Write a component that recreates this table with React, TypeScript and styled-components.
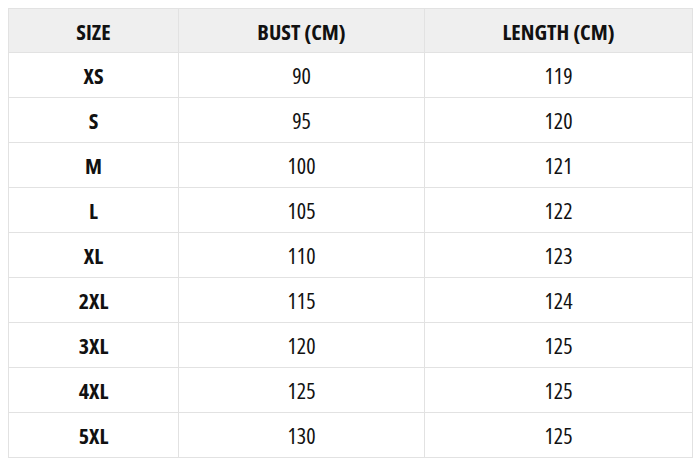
import React from "react";
import styled, { createGlobalStyle } from "styled-components";

const Global = createGlobalStyle`
  html, body { margin: 0; padding: 0; background: #ffffff; }
  body { font-family: "Open Sans", "Liberation Sans", sans-serif; }
`;

const Page = styled.div`
  padding: 8px;
  width: 700px;
  height: 467px;
  box-sizing: border-box;
`;

const Table = styled.table`
  width: 684px;
  border-collapse: collapse;
  table-layout: fixed;
  font-family: "Open Sans", "Liberation Sans", sans-serif;
  font-stretch: 75%;
  color: #111;
`;

const Th = styled.th`
  height: 43px;
  padding: 0;
  background: #efefef;
  border: 1.5px solid #e2e2e2;
  font-size: 22px;
  line-height: 1;
  font-weight: 700;
  text-align: center;
  vertical-align: middle;
`;

const Td = styled.td<{ $bold?: boolean }>`
  height: 44px;
  padding: 0;
  border: 1.5px solid #e2e2e2;
  font-size: 22px;
  line-height: 1;
  font-weight: ${(p) => (p.$bold ? 700 : 400)};
  text-align: center;
  vertical-align: middle;
`;

const rows: [string, string, string][] = [
  ["XS", "90", "119"],
  ["S", "95", "120"],
  ["M", "100", "121"],
  ["L", "105", "122"],
  ["XL", "110", "123"],
  ["2XL", "115", "124"],
  ["3XL", "120", "125"],
  ["4XL", "125", "125"],
  ["5XL", "130", "125"],
];

export default function App() {
  return (
    <Page>
      <Global />
      <Table>
        <colgroup>
          <col style={{ width: 170 }} />
          <col style={{ width: 246 }} />
          <col style={{ width: 268 }} />
        </colgroup>
        <thead>
          <tr>
            <Th>SIZE</Th>
            <Th>BUST (CM)</Th>
            <Th>LENGTH (CM)</Th>
          </tr>
        </thead>
        <tbody>
          {rows.map((r) => (
            <tr key={r[0]}>
              <Td $bold>{r[0]}</Td>
              <Td>{r[1]}</Td>
              <Td>{r[2]}</Td>
            </tr>
          ))}
        </tbody>
      </Table>
    </Page>
  );
}
